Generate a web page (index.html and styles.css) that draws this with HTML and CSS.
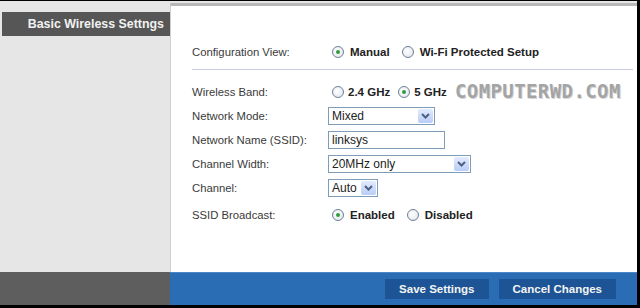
FILE: index.html
```html
<!DOCTYPE html>
<html lang="en">
<head>
  <meta charset="UTF-8">
  <title>Basic Wireless Settings</title>
  <link rel="stylesheet" href="styles.css">
</head>
<body>

  <div class="frame">
    <div class="main">
      <div class="sidebar">
        <div class="side-title">Basic Wireless Settngs</div>
      </div>

      <div class="content">
        <div class="panel">

          <div class="row row-config">
            <div class="label">Configuration View:</div>
            <div class="value radios">
              <span class="opt"><span class="radio on"></span>Manual</span>
              <span class="opt"><span class="radio"></span>Wi-Fi Protected Setup</span>
            </div>
          </div>

          <div class="sep"></div>

          <div class="row">
            <div class="label">Wireless Band:</div>
            <div class="value radios tight">
              <span class="opt"><span class="radio"></span>2.4 GHz</span>
              <span class="opt"><span class="radio on"></span>5 GHz</span>
            </div>
          </div>

          <div class="row">
            <div class="label">Network Mode:</div>
            <div class="value">
              <div class="select w-mode">
                <span class="select-text">Mixed</span>
                <span class="select-btn">
                  <svg width="9" height="6" viewBox="0 0 9 6"><path d="M1 1 L4.5 4.5 L8 1" fill="none" stroke="#4d6185" stroke-width="2"/></svg>
                </span>
              </div>
            </div>
          </div>

          <div class="row">
            <div class="label">Network Name (SSID):</div>
            <div class="value">
              <div class="textbox">linksys</div>
            </div>
          </div>

          <div class="row">
            <div class="label">Channel Width:</div>
            <div class="value">
              <div class="select w-width">
                <span class="select-text">20MHz only</span>
                <span class="select-btn">
                  <svg width="9" height="6" viewBox="0 0 9 6"><path d="M1 1 L4.5 4.5 L8 1" fill="none" stroke="#4d6185" stroke-width="2"/></svg>
                </span>
              </div>
            </div>
          </div>

          <div class="row">
            <div class="label">Channel:</div>
            <div class="value">
              <div class="select w-channel">
                <span class="select-text">Auto</span>
                <span class="select-btn">
                  <svg width="9" height="6" viewBox="0 0 9 6"><path d="M1 1 L4.5 4.5 L8 1" fill="none" stroke="#4d6185" stroke-width="2"/></svg>
                </span>
              </div>
            </div>
          </div>

          <div class="row row-last">
            <div class="label">SSID Broadcast:</div>
            <div class="value radios">
              <span class="opt"><span class="radio on"></span>Enabled</span>
              <span class="opt"><span class="radio"></span>Disabled</span>
            </div>
          </div>

          <div class="watermark">COMPUTERWD.COM</div>
        </div>
      </div>
    </div>

    <div class="footer">
      <div class="footer-side"></div>
      <div class="footer-bar">
        <button class="btn">Save Settings</button>
        <button class="btn">Cancel Changes</button>
      </div>
    </div>
  </div>

</body>
</html>
```

FILE: styles.css
```css
body {
  margin: 0;
  background-color: #000;
  font-family: 'Liberation Sans', Arial, sans-serif;
}

.frame {
  width: 640px;
  height: 308px;
  box-sizing: border-box;
  border-top: 1px solid #000;
  border-right: 3px solid #000;
  border-bottom: 3px solid #000;
  display: flex;
  flex-direction: column;
  background-color: #e6e6e6;
}

.main {
  display: flex;
  height: 271px;
}

/* left column */
.sidebar {
  width: 170px;
  background-color: #e6e6e6;
  padding-top: 11px;
}

.side-title {
  margin-left: 2px;
  height: 24px;
  line-height: 24px;
  background-color: #565656;
  color: #f2f2f2;
  font-weight: bold;
  font-size: 12.4px;
  text-align: right;
  padding-right: 6px;
}

/* white panel */
.content {
  flex: 1;
  display: flex;
  padding-top: 2px;
  background: linear-gradient(#e6e6e6, #d6d6d6);
}

.panel {
  flex: 1;
  position: relative;
  background-color: #fff;
  border-top: 3px solid #b8b8b8;
  border-left: 1px solid #cfcfcf;
  padding: 36px 4px 0 21px;
}

.row {
  display: flex;
  align-items: center;
  height: 24px;
}

.row-config { height: 20px; }
.row-last { margin-top: 3px; }

.label {
  width: 136px;
  font-size: 11.3px;
  color: #3a3a3a;
}

.value {
  display: flex;
  align-items: center;
}

.radios { padding-left: 4px; }

.opt {
  display: flex;
  align-items: center;
  font-size: 11.5px;
  font-weight: bold;
  color: #222;
  margin-right: 12px;
}

.tight .opt { margin-right: 8px; }
.tight .radio { margin-right: 4px; }

.radio {
  width: 12px;
  height: 12px;
  box-sizing: border-box;
  border: 1px solid #6f7f95;
  border-radius: 50%;
  background: radial-gradient(circle at 40% 40%, #fff, #dde2ea);
  margin-right: 6px;
  position: relative;
}

.radio.on::after {
  content: "";
  position: absolute;
  left: 3px;
  top: 3px;
  width: 4px;
  height: 4px;
  border-radius: 50%;
  background-color: #2f9e3a;
}

.sep {
  height: 1px;
  background-color: #c7cbe2;
  margin: 7px 0 10px 0;
}

/* form controls */
.select, .textbox {
  height: 18px;
  box-sizing: border-box;
  border: 1px solid #7f9db9;
  background-color: #fff;
  font-size: 12px;
  color: #222;
  display: flex;
  align-items: center;
}

.select-text {
  flex: 1;
  padding-left: 3px;
}

.select-btn {
  width: 15px;
  height: 14px;
  margin-right: 1px;
  border-radius: 2px;
  background: linear-gradient(#e3ebfd, #b9cdf6);
  display: flex;
  align-items: center;
  justify-content: center;
}

.w-mode { width: 107px; }
.w-width { width: 143px; }
.w-channel { width: 50px; }

.textbox {
  width: 117px;
  padding-left: 3px;
}

.watermark {
  position: absolute;
  left: 284px;
  top: 74px;
  font-family: 'DejaVu Sans Mono', monospace;
  font-weight: bold;
  font-size: 19px;
  letter-spacing: 0.4px;
  color: #a4a4a4;
  text-shadow: 1px 1px 0 #d6d6d6;
}

/* bottom bar */
.footer {
  display: flex;
  height: 33px;
}

.footer-side {
  width: 170px;
  background-color: #5e5e5e;
}

.footer-bar {
  flex: 1;
  background-color: #2b6db5;
  border-top: 1px solid #4a86c8;
  display: flex;
  align-items: center;
  justify-content: flex-end;
  padding-right: 21px;
  gap: 10px;
}

.btn {
  border: none;
  background-color: #1c5495;
  color: #f4f4f4;
  font-family: 'Liberation Sans', Arial, sans-serif;
  font-weight: bold;
  font-size: 11.5px;
  height: 20px;
  padding: 0 14px;
  cursor: pointer;
}
```
